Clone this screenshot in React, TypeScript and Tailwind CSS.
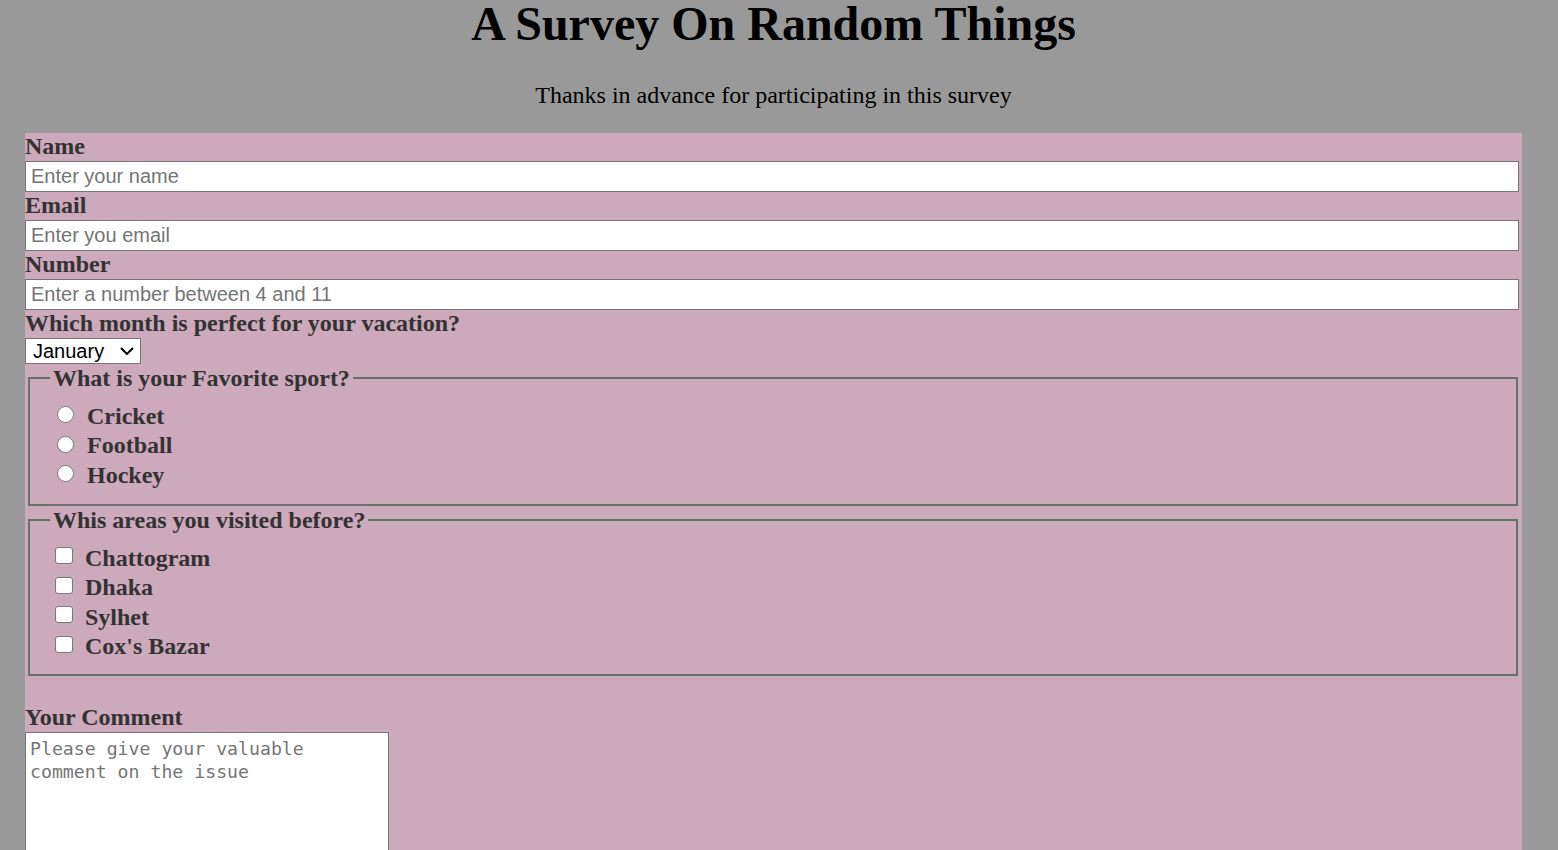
import React from "react";

const serif = { fontFamily: '"Liberation Serif", "Times New Roman", serif' };
const sans = { fontFamily: '"Liberation Sans", Arial, sans-serif' };

export default function App() {
  const sports = ["Cricket", "Football", "Hockey"];
  const areas = ["Chattogram", "Dhaka", "Sylhet", "Cox's Bazar"];

  return (
    <div className="h-[850px] overflow-hidden bg-[#999999]" style={serif}>
      <div className="ml-[25px] w-[1497px]">
        <h1 className="-mt-[4px] mb-[30px] text-center text-[48px] leading-[55px] font-bold text-black">
          A Survey On Random Things
        </h1>
        <p className="mb-[24px] text-center text-[24px] leading-[28px] text-black">
          Thanks in advance for participating in this survey
        </p>

        <form className="bg-[#cca9bb] pr-[3px] pb-[40px] text-[#333333]">
          <label className="block h-[28px] text-[24px] leading-[26px] font-bold">Name</label>
          <input
            type="text"
            placeholder="Enter your name"
            className="block h-[31px] w-full border border-[#767676] bg-white px-[5px] text-[20px] text-black placeholder:text-[#757575]"
            style={sans}
          />
          <label className="block h-[28px] text-[24px] leading-[26px] font-bold">Email</label>
          <input
            type="email"
            placeholder="Enter you email"
            className="block h-[31px] w-full border border-[#767676] bg-white px-[5px] text-[20px] text-black placeholder:text-[#757575]"
            style={sans}
          />
          <label className="block h-[28px] text-[24px] leading-[26px] font-bold">Number</label>
          <input
            type="number"
            placeholder="Enter a number between 4 and 11"
            className="block h-[31px] w-full border border-[#767676] bg-white px-[5px] text-[20px] text-black placeholder:text-[#757575]"
            style={sans}
          />
          <label className="block h-[28px] text-[24px] leading-[26px] font-bold">
            Which month is perfect for your vacation?
          </label>
          <div className="relative h-[26px] w-[116px]">
            <select
              className="h-full w-full appearance-none border border-[#767676] bg-white pl-[7px] text-[20px] leading-[24px] text-black"
              style={sans}
            >
              <option>January</option>
              <option>February</option>
              <option>March</option>
              <option>April</option>
            </select>
            <svg className="pointer-events-none absolute right-[7px] top-[9px]" width="14" height="8" viewBox="0 0 14 8">
              <path d="M1 1l6 6 6-6" fill="none" stroke="#000" strokeWidth="2" />
            </svg>
          </div>

          <fieldset className="ml-[3px] w-[1490px] border-2 border-[#6d6d6d] px-[20px] pt-[9px] pb-[14px] shadow-[inset_1px_1px_0_#b5b5b5,1px_1px_0_#b5b5b5]">
            <legend className="bg-[#cca9bb] px-[3px] text-[24px] leading-[28px] font-bold">
              What is your Favorite sport?
            </legend>
            {sports.map((s) => (
              <label key={s} className="flex h-[29.6px] items-center text-[24px] font-bold">
                <input
                  type="radio"
                  name="sport"
                  className="ml-[7px] mr-[13px] h-[17px] w-[17px] -translate-y-[1px] appearance-none rounded-full border border-[#7a7a7a] bg-white"
                />
                <span className="leading-[24px]">{s}</span>
              </label>
            ))}
          </fieldset>

          <fieldset className="ml-[3px] w-[1490px] border-2 border-[#6d6d6d] px-[20px] pt-[9px] pb-[13px] shadow-[inset_1px_1px_0_#b5b5b5,1px_1px_0_#b5b5b5]">
            <legend className="bg-[#cca9bb] px-[3px] text-[24px] leading-[28px] font-bold">
              Whis areas you visited before?
            </legend>
            {areas.map((a) => (
              <label key={a} className="flex h-[29.6px] items-center text-[24px] font-bold">
                <input
                  type="checkbox"
                  className="ml-[5px] mr-[12px] h-[17px] w-[18px] -translate-y-[2px] appearance-none rounded-[3px] border border-[#7a7a7a] bg-white"
                />
                <span className="leading-[24px]">{a}</span>
              </label>
            ))}
          </fieldset>

          <label className="mt-[28px] block h-[28px] text-[24px] leading-[26px] font-bold">Your Comment</label>
          <textarea
            placeholder="Please give your valuable comment on the issue"
            className="block h-[200px] w-[364px] border border-[#767676] bg-white pl-[4px] pt-[4px] text-[18.2px] leading-[23px] text-black placeholder:text-[#757575]"
            style={{ fontFamily: '"DejaVu Sans Mono", "Liberation Mono", monospace' }}
          />
        </form>
      </div>
    </div>
  );
}
